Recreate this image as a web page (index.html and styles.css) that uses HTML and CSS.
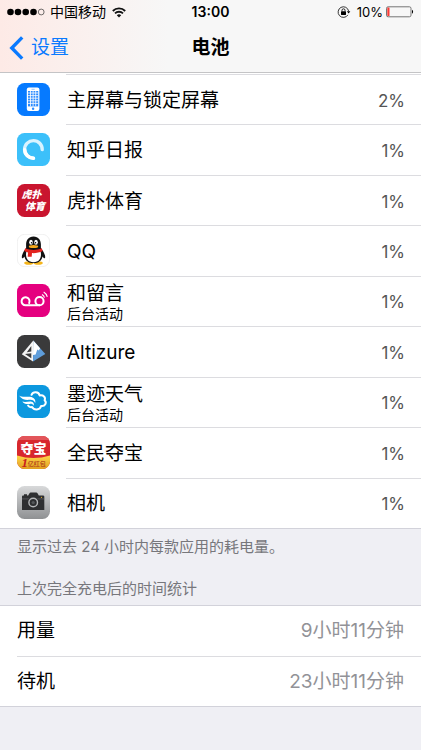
FILE: index.html
```html
<!DOCTYPE html>
<html lang="zh-CN">
<head>
  <meta charset="UTF-8">
  <meta name="viewport" content="width=device-width, initial-scale=1.0">
  <title>电池</title>
  <link rel="stylesheet" href="styles.css">
</head>
<body>

  <header class="topbar">
    <div class="status">
      <div class="status-left">
        <svg class="signal" width="39" height="10" viewBox="0 0 39 10" aria-hidden="true">
          <circle cx="3.5" cy="5" r="3.3"/>
          <circle cx="11" cy="5" r="3.3"/>
          <circle cx="18.7" cy="5" r="3.3"/>
          <circle cx="26.5" cy="5" r="3.3"/>
          <circle cx="34.2" cy="5" r="2.9" fill="none" stroke="#333" stroke-width="0.7"/>
        </svg>
        <span>中国移动</span>
        <svg class="wifi" width="14" height="11" viewBox="0 0 14 11" aria-hidden="true">
          <path d="M0.8 4a8.8 8.8 0 0 1 12.4 0M3 6.4a5.7 5.7 0 0 1 8 0" fill="none" stroke="#111" stroke-width="1.8"/>
          <path d="M7 10.6L4.8 8.3a3.1 3.1 0 0 1 4.4 0z" fill="#111"/>
        </svg>
      </div>
      <span class="time">13:00</span>
      <div class="status-right">
        <svg class="lock" width="14" height="12" viewBox="0 0 14 12" aria-hidden="true">
          <path d="M10.9 8.9A5.3 5.3 0 1 1 11.6 5" fill="none" stroke="#222" stroke-width="0.9"/>
          <path d="M9.9 5.2h3.4l-1.7 2.3z"/>
          <rect x="4" y="5.3" width="5" height="3.6" rx="0.4"/>
          <path d="M5 5.5V4.3a1.5 1.5 0 0 1 3 0v1.2" fill="none" stroke="#111" stroke-width="0.9"/>
        </svg>
        <span>10%</span>
        <svg class="battery" width="28" height="12" viewBox="0 0 28 12" aria-hidden="true">
          <rect x="0.5" y="0.8" width="24.5" height="10" rx="1.6" fill="none" stroke="#666" stroke-width="0.9"/>
          <rect x="1.3" y="1.6" width="2.2" height="8.4" rx="0.5" fill="#fb3b36"/>
          <path d="M26 3.8a2.4 2.4 0 0 1 0 4z"/>
        </svg>
      </div>
    </div>
    <nav class="nav">
      <a class="back" href="#">
        <svg width="15" height="24" viewBox="0 0 15 24" aria-hidden="true">
          <path d="M13.2 1.4L2.8 12l10.4 10.6" fill="none" stroke="#0a7aff" stroke-width="3.4"/>
        </svg>
        <span>设置</span>
      </a>
      <h1>电池</h1>
    </nav>
  </header>

  <main>
    <ul class="apps">
      <li class="app">
        <svg class="icon" viewBox="0 0 33 33" aria-hidden="true">
          <rect width="33" height="33" rx="7.5" fill="#067aff"/>
          <rect x="9.8" y="4.5" width="12.6" height="23.6" rx="2" fill="#fff"/>
          <rect x="11" y="8" width="10.2" height="15.4" fill="#2b8bff"/>
          <path d="M11 10h10.2M11 12.6h10.2M11 15.2h10.2M11 17.8h10.2M11 20.4h10.2M13.5 8v15.4M16.1 8v15.4M18.7 8v15.4" stroke="#fff" stroke-width="0.8"/>
          <path d="M14.5 6.3h3.2" stroke="#72b2ff" stroke-width="0.7"/>
          <circle cx="16.1" cy="25.7" r="1.2" fill="#2b8bff"/>
        </svg>
        <div class="row"><span class="name">主屏幕与锁定屏幕</span><span class="percent">2%</span></div>
      </li>
      <li class="app">
        <svg class="icon" viewBox="0 0 33 33" aria-hidden="true">
          <rect width="33" height="33" rx="7.5" fill="#3cc0fa"/>
          <path d="M25.2 16.6A8.8 8.8 0 1 0 16.5 25.2" fill="none" stroke="#d9f3ff" stroke-width="3.4" stroke-linecap="round"/>
          <path d="M7.7 16.6A8.8 8.8 0 0 0 16.5 25.2" fill="none" stroke="#fff" stroke-width="3.4" stroke-linecap="round"/>
        </svg>
        <div class="row"><span class="name">知乎日报</span><span class="percent">1%</span></div>
      </li>
      <li class="app">
        <svg class="icon" viewBox="0 0 33 33" aria-hidden="true">
          <rect width="33" height="33" rx="7.5" fill="#c9152f"/>
          <text class="hupu" x="4.5" y="14">虎扑</text>
          <text class="hupu" x="8" y="26">体育</text>
        </svg>
        <div class="row"><span class="name">虎扑体育</span><span class="percent">1%</span></div>
      </li>
      <li class="app">
        <svg class="icon" viewBox="0 0 33 33" aria-hidden="true">
          <rect x="0.3" y="0.3" width="32.4" height="32.4" rx="7.5" fill="#fff" stroke="#e6e6e6" stroke-width="0.6"/>
          <ellipse cx="11.8" cy="29" rx="4.6" ry="1.8" fill="#f5b51b"/>
          <ellipse cx="21.2" cy="29" rx="4.6" ry="1.8" fill="#f5b51b"/>
          <path d="M16.5 2.5c5 0 7.4 3.7 7.4 8v3.4c1.8 2.3 4.4 6.3 4.3 9.3-.1 1.6-1.5 1.1-2.7-.8-.7 4-4 6.7-9 6.7s-8.3-2.7-9-6.7c-1.2 1.9-2.6 2.4-2.7.8-.1-3 2.5-7 4.3-9.3v-3.4c0-4.3 2.4-8 7.4-8z" fill="#111"/>
          <path d="M9.5 17h14c1.5 5.700-.5 11.200-7 11.200s-8.500-5.500-7-11.200z" fill="#fff"/>
          <ellipse cx="14" cy="8.300" rx="1.800" ry="2.500" fill="#fff"/>
          <ellipse cx="19" cy="8.300" rx="1.800" ry="2.500" fill="#fff"/>
          <circle cx="14.600" cy="8.700" r="0.800"/>
          <circle cx="18.500" cy="8.700" r="0.800"/>
          <ellipse cx="16.500" cy="12.500" rx="4.700" ry="1.500" fill="#f5a81b"/>
          <path d="M8.300 14.300c5 2.300 11.400 2.300 16.400 0l1 2.700c-3 1.600-7 2.300-10.700 2.100l-.3 3.700-4-.1.300-4.200c-1.600-.4-2.900-.9-3.800-1.500z" fill="#e2231f"/>
        </svg>
        <div class="row"><span class="name">QQ</span><span class="percent">1%</span></div>
      </li>
      <li class="app">
        <svg class="icon" viewBox="0 0 33 33" aria-hidden="true">
          <rect width="33" height="33" rx="7.5" fill="#e5007f"/>
          <path d="M12.200 19A4 4 0 1 0 8.700 21.300H22.500" fill="none" stroke="#fff" stroke-width="2" stroke-linecap="round"/>
          <circle cx="22.500" cy="17.200" r="4.100" fill="none" stroke="#fff" stroke-width="2"/>
          <path d="M25 10.500a5 5 0 0 1 2.500 3.200M26.700 8a8 8 0 0 1 3.600 4.800" fill="none" stroke="#fff" stroke-width="1.100"/>
        </svg>
        <div class="row">
          <div class="name">和留言<small>后台活动</small></div>
          <span class="percent">1%</span>
        </div>
      </li>
      <li class="app">
        <svg class="icon" viewBox="0 0 33 33" aria-hidden="true">
          <rect width="33" height="33" rx="7.5" fill="#3a3a3b"/>
          <path d="M16.300 5.500L4.800 19.300 16 26.500z" fill="#f4f4f4"/>
          <path d="M14.300 11v5.500l-4.500.8zM8 19l6.300-.7v5z" fill="#3a3a3b"/>
          <path d="M16.300 5.500L28.300 19 16 26.500z" fill="#5e9ddb"/>
          <path d="M16.300 5.500l6.800 7.700-1.300 2.400-1.500-1-1.700 4.800-2.600.7z" fill="#fff"/>
        </svg>
        <div class="row"><span class="name">Altizure</span><span class="percent">1%</span></div>
      </li>
      <li class="app">
        <svg class="icon" viewBox="0 0 33 33" aria-hidden="true">
          <rect width="33" height="33" rx="7.5" fill="#0c98df"/>
          <path d="M14.500 9.800c1.600-3.600 7.200-3.200 8.200.6 3.600-.7 6.300 1.800 4.900 4.900 2.600 2.400.4 6.400-3.500 5.700-1.200 4.200-7 4.600-9 1-1.600.4-3.200-.2-4-1.500" fill="none" stroke="#fff" stroke-width="2" stroke-linejoin="round" stroke-linecap="round"/>
          <path d="M2 10.500c4 2.500 8.500.3 12.500 1.600 3 1 4.300 3.300 3.800 6-1-2.500-3-3.600-5.700-3.300-4.100.4-8.100-.3-10.600-4.300z" fill="#fff"/>
          <path d="M5.300 16.500c3.300 1.300 6.400-.6 9.300.2 2 .6 2.700 2.200 2 4-.8-1.500-2-2.100-3.800-1.800-3 .5-5.700.2-7.500-2.400z" fill="#fff"/>
        </svg>
        <div class="row">
          <div class="name">墨迹天气<small>后台活动</small></div>
          <span class="percent">1%</span>
        </div>
      </li>
      <li class="app">
        <svg class="icon" viewBox="0 0 33 33" aria-hidden="true">
          <defs>
            <clipPath id="tile"><rect width="33" height="33" rx="7.5"/></clipPath>
            <linearGradient id="gold" x1="0" y1="0" x2="0" y2="1">
              <stop offset="0" stop-color="#ffd54a"/>
              <stop offset="1" stop-color="#e0a020"/>
            </linearGradient>
          </defs>
          <g clip-path="url(#tile)">
            <rect width="33" height="33" fill="#d8272d"/>
            <path d="M0 0h33v4H0z" fill="#e2555a"/>
            <path d="M0 19.500q16.500 5 33 0V33H0z" fill="url(#gold)"/>
          </g>
          <text class="duobao" x="3.500" y="17">夺宝</text>
          <text class="one" x="4.500" y="30.500">1</text>
          <text class="hongbao" x="10.800" y="29.500">亿红包</text>
        </svg>
        <div class="row"><span class="name">全民夺宝</span><span class="percent">1%</span></div>
      </li>
      <li class="app">
        <svg class="icon" viewBox="0 0 33 33" aria-hidden="true">
          <defs>
            <linearGradient id="steel" x1="0" y1="0" x2="0" y2="1">
              <stop offset="0" stop-color="#d8d9da"/>
              <stop offset="1" stop-color="#8f9193"/>
            </linearGradient>
          </defs>
          <rect width="33" height="33" rx="7.5" fill="url(#steel)"/>
          <path d="M5 10.500q0-1 1-1h1V8.300h3v1.200h1.200l1.300-2.200q.4-.7 1.200-.7h5.600q.8 0 1.200.7l1.300 2.200H26q1.300 0 1.300 1V24H5z" fill="#2e2f31"/>
          <path d="M5 12.900h22.300" stroke="#77797b" stroke-width="0.500"/>
          <circle cx="16.200" cy="16.500" r="5.800" fill="#2e2f31"/>
          <circle cx="16.200" cy="16.500" r="4.300" fill="none" stroke="#b4b6b8" stroke-width="1.400"/>
          <circle cx="16.200" cy="16.500" r="1.600" fill="#55585b"/>
          <circle cx="24.500" cy="11.300" r="0.600" fill="#e9b52d"/>
        </svg>
        <div class="row"><span class="name">相机</span><span class="percent">1%</span></div>
      </li>
    </ul>

    <p class="note">显示过去 24 小时内每款应用的耗电量。</p>

    <h2 class="group-title">上次完全充电后的时间统计</h2>
    <ul class="usage">
      <li><span>用量</span><span class="duration">9小时11分钟</span></li>
      <li><span>待机</span><span class="duration">23小时11分钟</span></li>
    </ul>
  </main>

</body>
</html>
```
FILE: styles.css
```css
* {
  box-sizing: border-box;
}
body {
  margin: 0;
  font-family: Inter, "Noto Sans CJK SC", sans-serif;
  font-size: 19px;
  line-height: 24px;
  color: #000;
  background-color: #efeff4;
}
ul {
  list-style: none;
  margin: 0;
  padding: 0;
}
.topbar {
  background: linear-gradient(to right, #fdeae6, #f7f7f7 40%);
  border-bottom: 1px solid #c4c4c6;
}

/* status bar */
.status {
  display: grid;
  grid-template-columns: 1fr auto 1fr;
  align-items: center;
  height: 24px;
  padding: 0 7px;
  font-size: 14px;
}
.status-left, .status-right {
  display: flex;
  align-items: center;
}
.status-left {
  gap: 4px;
}
.wifi {
  margin-left: 2px;
}
.time {
  font-weight: 600;
}
.status-right {
  justify-content: flex-end;
  gap: 3px;
  font-size: 13px;
}
.lock {
  margin-right: 3px;
}

/* navigation */
.nav {
  display: grid;
  grid-template-columns: 1fr auto 1fr;
  align-items: center;
  height: 48px;
  padding: 0 9px;
}
.back {
  display: flex;
  align-items: center;
  gap: 7px;
  color: #0a7aff;
  text-decoration: none;
}
h1 {
  margin: 0;
  font-size: 19px;
  font-weight: 600;
}

/* app list */
.apps {
  display: grid;
  grid-auto-rows: 1fr;
  min-height: 456px;
  padding-top: 1px;
  background-color: #fff;
  border-bottom: 1px solid #d2d2da;
}
.app {
  display: flex;
  align-items: center;
  padding-left: 17px;
}
.icon {
  width: 33px;
  height: 33px;
  margin-right: 16px;
  flex: none;
}
.row {
  flex: 1;
  align-self: stretch;
  display: flex;
  align-items: center;
  justify-content: space-between;
  padding: 2px 16px 0 1px;
  border-top: 1px solid #dcdce0;
}
.name small {
  display: block;
  font-size: 14px;
  line-height: 16px;
}
.percent {
  font-size: 17px;
  color: #555;
}

/* lettering inside the app icons */
.hupu {
  font-size: 10px;
  font-weight: 900;
  font-style: italic;
  fill: #fff;
}
.duobao {
  font-size: 13px;
  font-weight: 900;
  fill: #fff;
}
.one {
  font-family: "Liberation Serif", serif;
  font-size: 13px;
  font-weight: bold;
  font-style: italic;
  fill: #c8201c;
}
.hongbao {
  font-size: 6px;
  font-weight: bold;
  fill: #b8501c;
}

.note, .group-title {
  margin: 0;
  padding: 0 17px;
  font-size: 15px;
  font-weight: 400;
  line-height: 20px;
  color: #77777c;
}
.note {
  padding-top: 8px;
}
.group-title {
  padding-top: 22px;
  padding-bottom: 6px;
}

/* usage since last charge */
.usage {
  background-color: #fff;
  border-top: 1px solid #d2d2da;
  border-bottom: 1px solid #d2d2da;
}
.usage li {
  display: flex;
  align-items: center;
  justify-content: space-between;
  height: 50px;
  margin-left: 17px;
  padding-right: 17px;
}
.usage li + li {
  border-top: 1px solid #dcdce0;
}
.duration {
  color: #929297;
}
```
